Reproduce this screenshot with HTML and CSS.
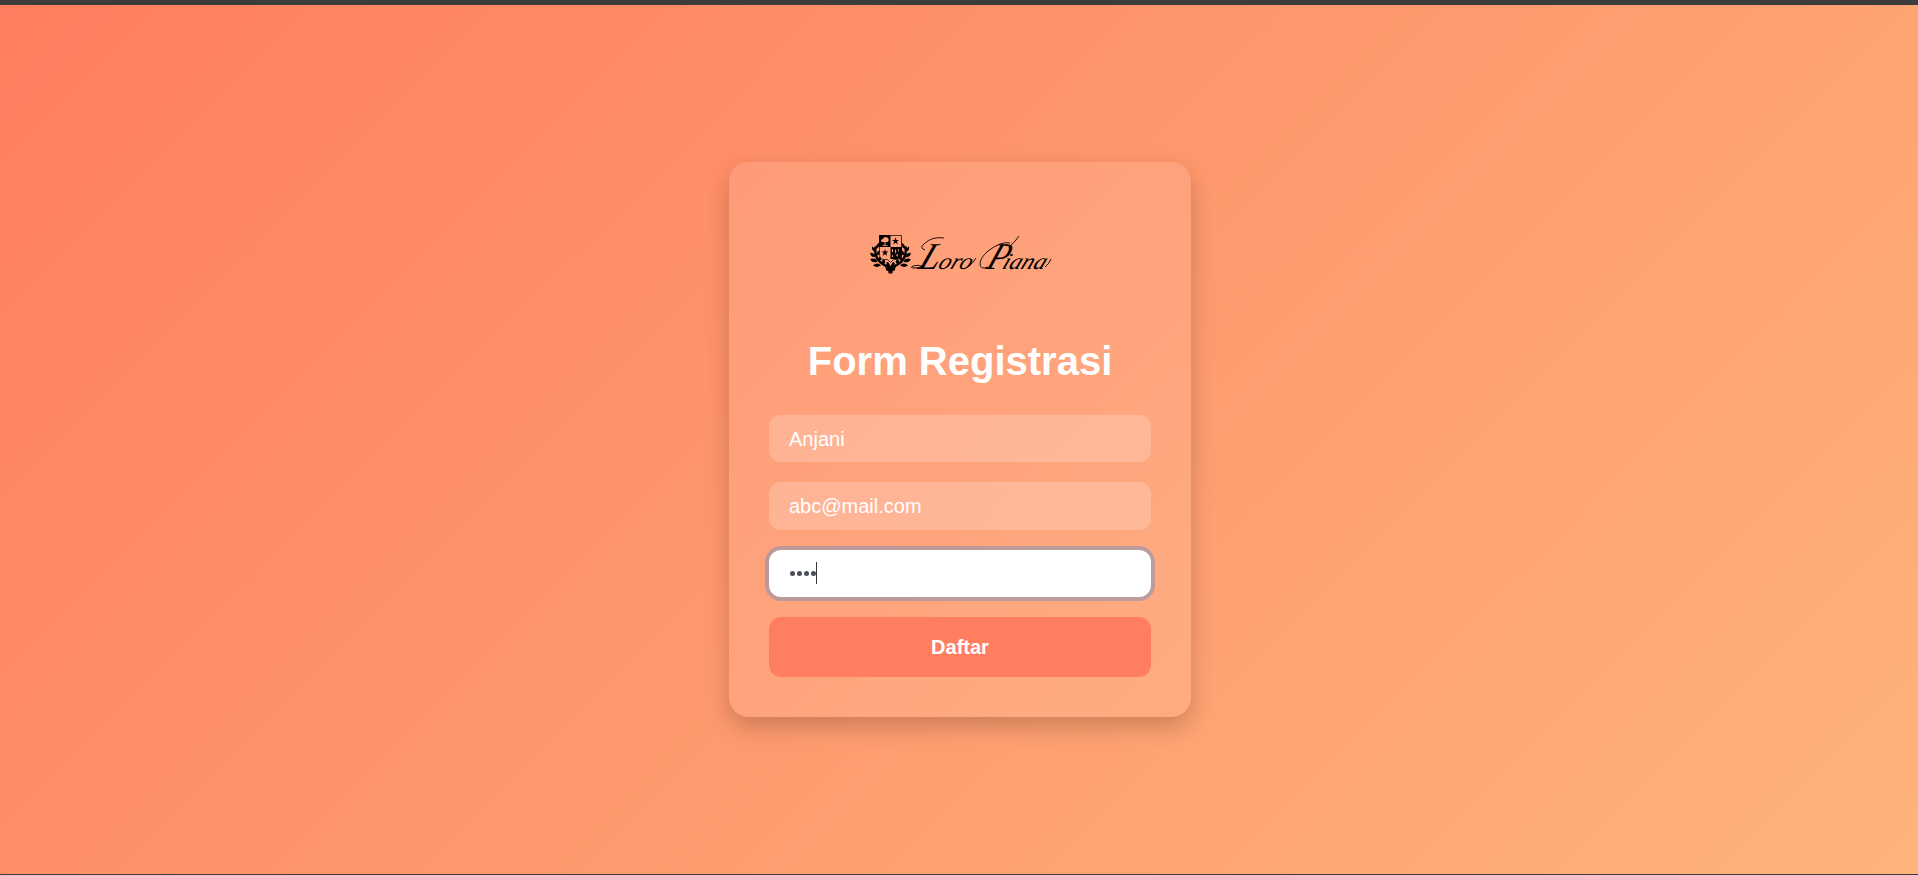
FILE: index.html
```html
<!DOCTYPE html>
<html lang="id">
<head>
<meta charset="utf-8">
<title>Form Registrasi</title>
<link rel="stylesheet" href="styles.css">
</head>
<body>
<main class="page">
  <form class="card">
    <svg class="logo" viewBox="860 202 200 106" role="img" aria-label="Loro Piana">
      <!-- laurel branches -->
      <g transform="translate(890.500 250) scale(.9) translate(-890.500 -250)">
        <g id="laurel">
          <path d="M874 246Q871 263 889 269" fill="none" stroke="#000" stroke-width="2.600"/>
          <path d="M874 252q-5-1-4-6q4 2 4 6zM874 258q-6 0-6-5q5 0 6 5zM876 263q-6 2-8-3q6-2 8 3zM880 267q-5 4-9 0q5-4 9 0zM874 249q5-2 4-7q-4 2-4 7zM875 256q5-1 4-6q-4 1-4 6zM878 262q5-2 2-6q-4 2-2 6zM882 266q5-2 1-6q-4 3-1 6zM888 269q3-4-1-6q-3 3 1 6z"/>
        </g>
        <use href="#laurel" transform="matrix(-1 0 0 1 1781 0)"/>
        <path d="M888 264l2.500 4 2.500-4 1 6 3-3-2 6h-2l-.500 3h-4l-.500-3h-2l-2-6 3 3z"/>
      </g>
      <!-- quartered shield -->
      <path d="M879.500 235.500h22V254q0 5-4 5.500h-4l-3 3-3-3h-4q-4-.500-4-5.500z" fill="#ffa07a" stroke="#000" stroke-width=".7"/>
      <path d="M879 235h11.500v12H879zM890.500 247H902v7q0 5-5 5h-6.500z"/>
      <path d="M881 241q0-2 2-2 1-3 4-1.500 2 .500 1.500 3 .500 2-3 1.500v3h2v.700h-5V245h2v-3q-3 .500-3.500-1zM892 249h1v3h-1zM895 249l1.500 2-1.500 3zM898 249h1l-.500 4zM892 254l1.500 3h-1.500zM896 255l2-1-.500 3z" fill="#ffa07a"/>
      <path id="star" d="M895.500 237.500l.900 2.500h2.600l-2.100 1.600.800 2.600-2.200-1.500-2.200 1.500.800-2.600-2.100-1.600h2.600z"/>
      <use href="#star" transform="translate(-10.500 11.500)"/>
      <g class="wordmark">
        <text transform="translate(917 269) skewX(-22)"><tspan class="cap" textLength="20" lengthAdjust="spacingAndGlyphs">L</tspan><tspan x="20" textLength="33" lengthAdjust="spacingAndGlyphs">oro</tspan></text>
        <text transform="translate(985 269) skewX(-22)"><tspan class="cap" textLength="20" lengthAdjust="spacingAndGlyphs">P</tspan><tspan x="16" textLength="43" lengthAdjust="spacingAndGlyphs">iana</tspan></text>
      </g>
      <!-- swashes around the wordmark -->
      <path class="swash" d="M924 267q-6-3-11-1q-4 2 2 2q5 0 9-3M925 250q-6-2-1-6q8-8 20-6M969 266q4-3 7-8M988 267q-8 3-8-3q0-6 8-13q13-10 22-8M1010 246q5-4 9-10M1045 267q4-3 6-8"/>
    </svg>
    <h1 class="title">Form Registrasi</h1>
    <div class="fields">
      <div class="field">Anjani</div>
      <div class="field">abc@mail.com</div>
      <div class="field field-focus">
        <span class="dots"><i class="dot"></i><i class="dot"></i><i class="dot"></i><i class="dot"></i></span><span class="caret"></span>
      </div>
      <button class="submit" type="button">Daftar</button>
    </div>
  </form>
</main>
</body>
</html>
```
FILE: styles.css
```css
* { box-sizing: border-box; }

body {
  margin: 0;
  height: 875px;
  overflow: hidden;
  border-top: 5px solid #3c3c3c;
  border-bottom: 1px solid #3c3c3c;
  font-family: "Liberation Sans", Arial, sans-serif;
}

.page {
  height: 869px;
  display: flex;
  align-items: center;
  justify-content: center;
  background: linear-gradient(135deg, #ff7e5f, #feb47b);
}

.card {
  width: 462px;
  height: 555px;
  margin-left: 2px;
  padding: 40px;
  border-radius: 20px;
  background: rgba(255, 255, 255, 0.105);
  box-shadow: 0 10px 25px rgba(0, 0, 0, 0.2);
}

.logo {
  display: block;
  width: 200px;
  height: 106px;
  margin: 0 auto 30px;
}

.wordmark {
  font-family: "Liberation Serif", serif;
  font-style: italic;
  font-size: 23px;
}

.cap { font-size: 38px; }

.swash {
  fill: none;
  stroke: #000;
  stroke-width: 0.9;
}

.title {
  margin: 0 0 31px;
  font-size: 40px;
  line-height: 46px;
  text-align: center;
  color: #fff;
}

.fields {
  display: grid;
  gap: 20px;
}

.field {
  display: flex;
  align-items: center;
  height: 47.3px;
  padding: 1px 20px 0;
  border-radius: 12px;
  background: rgba(255, 255, 255, 0.2);
  color: #fff;
  font-size: 20px;
}

.field-focus {
  padding-top: 0;
  background: #fff;
  box-shadow: 0 0 0 4px rgba(108, 142, 191, 0.45);
}

.dots {
  display: flex;
  gap: 2px;
}

.dot {
  width: 5px;
  height: 5px;
  border-radius: 50%;
  background: #495057;
}

.dots { padding-left: 1px; }

.caret {
  width: 1px;
  height: 22px;
  background: #343a40;
}

.submit {
  height: 60px;
  padding: 2px 0 0;
  border: 0;
  border-radius: 12px;
  background: #ff7e5f;
  color: #fff;
  font: bold 20px "Liberation Sans", Arial, sans-serif;
}
```
